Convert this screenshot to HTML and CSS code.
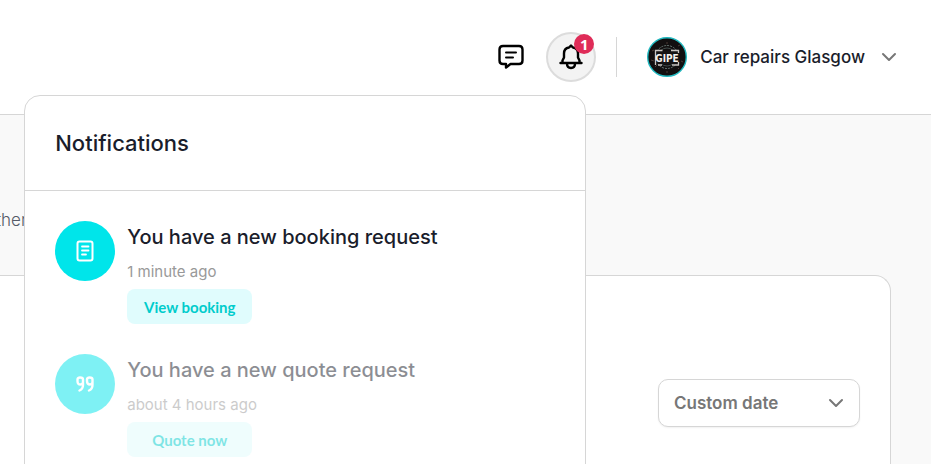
FILE: index.html
```html
<!DOCTYPE html>
<html lang="en">
<head>
  <meta charset="UTF-8" />
  <meta name="viewport" content="width=device-width, initial-scale=1.0" />
  <title>Dashboard</title>
  <link rel="stylesheet" href="styles.css">
</head>
<body>
  <header class="topbar">
    <button class="icon-btn" type="button" aria-label="Messages">
      <svg width="26" height="26" viewBox="0 0 26 26" fill="none" stroke="#000" stroke-width="2.4" stroke-linecap="round" stroke-linejoin="round">
        <path d="M5 2h16c2 0 3.500 1.500 3.500 3.500v11c0 2-1.500 3.500-3.500 3.500h-8.500L8 23.500V20H5c-2 0-3.500-1.500-3.500-3.500v-11C1.500 3.500 3 2 5 2z" />
        <path d="M8 8.500h10M8 13.500h7" stroke-width="2" />
      </svg>
    </button>

    <div class="bell">
      <button class="bell-btn" type="button" aria-label="Notifications">
        <svg width="26" height="26" viewBox="0 0 26 26" fill="none" stroke="#000" stroke-width="2.400" stroke-linecap="round" stroke-linejoin="round">
          <path d="M2.500 19h21M4.500 18.500v-2L6 13.500V9.500c0-3 2-5.500 5-6L13 1.500l2 2c3 .5 5 3 5 6v4l1.500 3v2" />
          <path d="M9 19.500c0 3 1.800 4.500 4 4.500s4-1.500 4-4.500" />
        </svg>
        <span class="badge">1</span>
      </button>

      <section class="panel">
        <h2 class="panel-title">Notifications</h2>
        <ul class="notes">
          <li class="note">
            <span class="note-icon">
              <svg width="18" height="22" viewBox="0 0 18 22" fill="none" stroke="#fff" stroke-width="2" stroke-linecap="round" stroke-linejoin="round">
                <rect x="1.500" y="1.500" width="15" height="19" rx="2" />
                <path d="M6 6.500h6.500M6 10.500h6.500M6 14.500h4" stroke-width="1.800" />
              </svg>
            </span>
            <div class="note-body">
              <h3 class="note-title">You have a new booking request</h3>
              <p class="note-time">1 minute ago</p>
              <button class="note-btn" type="button">View booking</button>
            </div>
          </li>
          <li class="note read">
            <span class="note-icon">
              <svg width="18" height="16" viewBox="0 0 18 16" fill="none" stroke="#fff" stroke-width="2.400" stroke-linecap="round" stroke-linejoin="round">
                <path d="M7 6.500C6.500 8 5.500 8.500 4.500 8.500 2.500 8.500 1.500 7.500 1.500 5V3.500C1.500 2 2.500 1.500 4 1.500s3 .5 3 2V9c0 3-1 4.500-3.500 5.500" />
                <path d="M16.500 6.500c-.5 1.500-1.500 2-2.500 2-2 0-3-1-3-3.500V3.500c0-1.500 1-2 2.500-2s3 .5 3 2V9c0 3-1 4.500-3.500 5.500" />
              </svg>
            </span>
            <div class="note-body">
              <h3 class="note-title">You have a new quote request</h3>
              <p class="note-time">about 4 hours ago</p>
              <button class="note-btn" type="button">Quote now</button>
            </div>
          </li>
        </ul>
      </section>
    </div>

    <button class="account" type="button">
      <svg class="avatar" width="40" height="40" viewBox="0 0 40 40">
        <circle cx="20" cy="20" r="19.300" fill="#120f10" stroke="#20b8bf" stroke-width="1.400" />
        <g fill="none" stroke="#667572" stroke-width="1">
          <circle cx="20" cy="20" r="11.500" stroke-dasharray="2 1" />
          <circle cx="20" cy="20" r="9" stroke="#404b4a" />
          <path d="M5 14l2-1M4 23l3 1M8 30l2-2M31 9l2-1M34 24l2 1M31 31l1 1M20 5v2M20 34v2" stroke="#4a3a35" />
        </g>
        <path d="M8 14h24v13H8z" fill="#151314" />
        <path d="M8.500 28V13.500h7M24 13.500h7.500V16M25 28h6.500v-3M11 28h4" fill="none" stroke="#c9c5c2" stroke-width="1.300" />
        <text class="avatar-text" x="20" y="25" text-anchor="middle">GIPE</text>
      </svg>
      <span>Car repairs Glasgow</span>
      <svg class="chevron" width="16" height="10" viewBox="0 0 16 10"><path d="M2 2l6 6 6-6" /></svg>
    </button>
  </header>

  <main class="page">
    <p class="intro">ther</p>
    <section class="card">
      <div class="date-filter">
        <select class="date-select" aria-label="Date range">
          <option>Custom date</option>
        </select>
        <svg class="chevron" width="16" height="10" viewBox="0 0 16 10"><path d="M2 2l6 6 6-6" /></svg>
      </div>
    </section>
  </main>
</body>
</html>
```
FILE: styles.css
```css
* {
  box-sizing: border-box;
}

body {
  margin: 0;
  padding-right: 5px;
  height: 100vh;
  overflow: hidden;
  display: flex;
  flex-direction: column;
  background: #fff;
  font-family: Inter, "Liberation Sans", sans-serif;
  color: #1a1d2b;
}

h2, h3, p, ul {
  margin: 0;
  padding: 0;
}

button {
  border: none;
  background: none;
  padding: 0;
  font-family: inherit;
  color: inherit;
  cursor: pointer;
}

svg {
  display: block;
}

.topbar {
  display: flex;
  align-items: center;
  justify-content: flex-end;
  flex-shrink: 0;
  height: 115px;
  padding-right: 34px;
  border-bottom: 1px solid #d6d6d6;
  background: #fff;
}

.icon-btn {
  margin-right: 22px;
}

.bell {
  position: relative;
  margin-right: 20px;
}

.bell-btn {
  position: relative;
  display: grid;
  place-items: center;
  width: 50px;
  height: 50px;
  border: 2px solid #dcdcdc;
  border-radius: 50%;
  background: #f3f3f3;
}

.badge {
  position: absolute;
  top: 0;
  right: 0;
  width: 20px;
  height: 20px;
  border-radius: 50%;
  background: #df2c58;
  color: #fff;
  font: 700 15px/20px "Open Sans", sans-serif;
  text-align: center;
}

.account {
  display: flex;
  align-items: center;
  height: 40px;
  padding-left: 30px;
  border-left: 1px solid #d6d6d6;
  font-size: 17px;
  font-weight: 500;
}

.avatar {
  margin-right: 13px;
}

.avatar-text {
  font: 700 10px "DejaVu Sans Condensed", sans-serif;
  fill: #f4f1ee;
}

.chevron {
  fill: none;
  stroke: #777;
  stroke-width: 2;
  stroke-linecap: round;
  stroke-linejoin: round;
}

.account .chevron {
  margin-left: 16px;
}

/* notifications dropdown */
.panel {
  position: absolute;
  top: 63px;
  right: 10px;
  z-index: 10;
  width: 562px;
  border: 1px solid #d6d6d6;
  border-radius: 16px;
  background: #fff;
}

.panel-title {
  padding: 32px 30px;
  border-bottom: 1px solid #d6d6d6;
  font-size: 22px;
  line-height: 30px;
  font-weight: 500;
}

.notes {
  padding: 30px;
  list-style: none;
  display: flex;
  flex-direction: column;
  gap: 30px;
}

.note {
  display: flex;
  gap: 12px;
}

.note.read {
  opacity: 0.5;
}

.note-icon {
  display: grid;
  place-items: center;
  width: 60px;
  height: 60px;
  border-radius: 50%;
  background: #00e5ea;
}

.note-title {
  font-size: 20px;
  line-height: 32px;
  font-weight: 500;
}

.note-time {
  margin: 9px 0 7px;
  font-size: 15px;
  line-height: 20px;
  color: #999;
}

.note-btn {
  display: block;
  width: 125px;
  height: 35px;
  border-radius: 8px;
  background: #e0fcfd;
  color: #0cc;
  font-family: Lato, sans-serif;
  font-size: 15px;
  font-weight: 700;
}

/* page behind the dropdown */
.page {
  flex: 1;
  display: flex;
  flex-direction: column;
  margin-left: -20px;
  padding-top: 90px;
  padding-right: 40px;
  background: #f9f9f9;
}

.intro {
  margin-bottom: 40px;
  padding-left: 16px;
  font-size: 17px;
  line-height: 30px;
  font-weight: 300;
  color: #555b68;
}

.card {
  flex: 1;
  padding: 103px 30px 30px;
  border: 1px solid #d6d6d6;
  border-radius: 16px 16px 0 0;
  border-bottom: none;
  background: #fff;
}

.date-filter {
  display: grid;
  align-items: center;
  width: 202px;
  margin-left: auto;
}

.date-select,
.date-filter .chevron {
  grid-area: 1 / 1;
}

.date-filter .chevron {
  justify-self: end;
  margin-right: 16px;
  pointer-events: none;
}

.date-select {
  appearance: none;
  width: 100%;
  height: 48px;
  padding: 0 15px;
  border: 1px solid #d6d6d6;
  border-radius: 10px;
  background: #fff;
  box-shadow: 0 1px 2px rgba(0, 0, 0, 0.06);
  color: #777;
  font-family: inherit;
  font-size: 17px;
  font-weight: 600;
}
```
